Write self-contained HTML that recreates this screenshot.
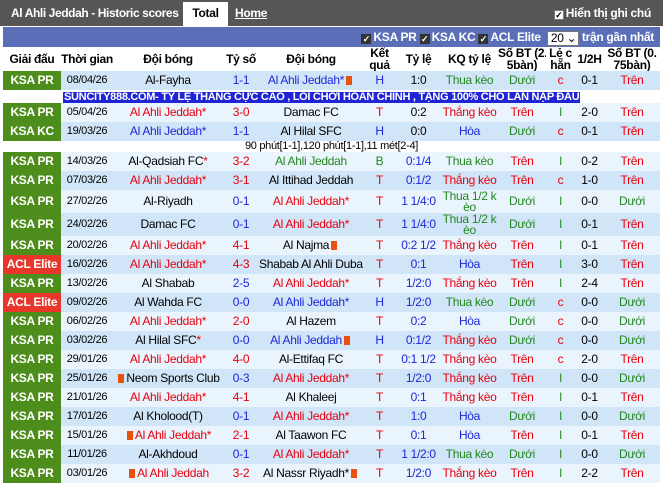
<!DOCTYPE html>
<html><head><meta charset="utf-8"><style>
*{margin:0;padding:0;box-sizing:border-box}
body{width:663px;height:482px;overflow:hidden;background:#fff;font-family:"Liberation Sans",sans-serif;font-size:12px;letter-spacing:-0.3px}
.top{height:26px;background:#565656;position:relative;color:#fff;font-weight:bold;font-size:12px}
.top .t{position:absolute;left:11px;top:6px;letter-spacing:-0.4px}
.tab{position:absolute;left:183px;top:2px;width:45px;height:24px;background:#fff;color:#000;text-align:center;line-height:22px}
.home{position:absolute;left:235px;top:6px;text-decoration:underline}
.show{position:absolute;right:12px;top:6px}
.cb{display:inline-block;width:10px;height:10px;background:#fff;border:1px solid #777;vertical-align:-1px;margin-right:2px;font-size:9px;line-height:8px;color:#000;text-align:center}
.filt{height:20px;margin:1px 3px 0;background:#5a6fb8;color:#fff;font-weight:bold;font-size:12px;text-align:right;padding:3px 6px 0 0}
.filt .cb{background:#333;color:#fff;border-color:#333}
.sel{display:inline-block;width:32px;height:15px;background:#fff;color:#000;border:1px solid #777;font-weight:normal;text-align:left;padding-left:3px;line-height:13px;vertical-align:-1px}
table{border-collapse:collapse;table-layout:fixed;width:657px;margin-left:3px}
td{text-align:center;white-space:nowrap;height:19px;padding:0;font-size:12px;line-height:13px;overflow:hidden}
th{font-weight:bold;font-size:12px;line-height:12px;height:22px;background:#fff;white-space:nowrap;overflow:hidden;padding:0}
.lg{color:#fff;font-weight:bold;font-size:12px}
.a td{background:#d0e5f7}.b td{background:#eaf4fc}
.a td.lg.g,.b td.lg.g{background:#4d8d1c}.a td.lg.r,.b td.lg.r{background:#e8372a}
.d{font-size:11px}
.red{color:#e8000e}.blu{color:#1d27d9}.grn{color:#23861f}
.tall td{height:23px;line-height:11px}
.ban td{height:11px;background:#fff}
.ban span{background:#1f24d4;color:#fff;font-weight:bold;font-size:11px;line-height:11px;display:inline-block;padding:0 1px}
.note td{height:11px;font-size:11px;line-height:11px;background:#fff}
.ic{display:inline-block;width:6px;height:9px;background:#e8520e;vertical-align:-1px;margin:0 2px}
</style></head><body>
<div class="top"><span class="t">Al Ahli Jeddah - Historic scores</span><span class="tab">Total</span><span class="home">Home</span><span class="show"><span class="cb">✓</span>Hiển thị ghi chú</span></div>
<div class="filt"><span class="cb">✓</span>KSA PR <span class="cb">✓</span>KSA KC <span class="cb">✓</span>ACL Elite &nbsp;<span class="sel">20 ⌄</span> trận gần nhất</div>
<table>
<colgroup><col style="width:58px"><col style="width:52px"><col style="width:110px"><col style="width:36px"><col style="width:104px"><col style="width:33px"><col style="width:45px"><col style="width:57px"><col style="width:48px"><col style="width:29px"><col style="width:29px"><col style="width:56px"></colgroup>
<tr><th>Giải đấu</th><th>Thời gian</th><th>Đội bóng</th><th>Tỷ số</th><th>Đội bóng</th><th>Kết<br>quả</th><th>Tỷ lệ</th><th>KQ tỷ lệ</th><th>Số BT (2.<br>5bàn)</th><th>Lẻ c<br>hẵn</th><th>1/2H</th><th>Số BT (0.<br>75bàn)</th></tr>
<tr class="a"><td class="lg g">KSA PR</td><td class="d">08/04/26</td><td>Al-Fayha</td><td class="blu">1-1</td><td class="blu">Al Ahli Jeddah*<span class="ic"></span></td><td class="blu">H</td><td>1:0</td><td class="grn">Thua kèo</td><td class="grn">Dưới</td><td class="red">c</td><td>0-1</td><td class="red">Trên</td></tr>
<tr class="ban"><td colspan="12" style="text-align:left;padding-left:60px"><span>SUNCITY888.COM- TỶ LỆ THẮNG CỰC CAO , LỐI CHƠI HOÀN CHỈNH , TẶNG 100% CHO LẦN NẠP ĐẦU</span></td></tr>
<tr class="b"><td class="lg g">KSA PR</td><td class="d">05/04/26</td><td class="red">Al Ahli Jeddah*</td><td class="red">3-0</td><td>Damac FC</td><td class="red">T</td><td>0:2</td><td class="red">Thắng kèo</td><td class="red">Trên</td><td class="grn">l</td><td>2-0</td><td class="red">Trên</td></tr>
<tr class="a"><td class="lg g">KSA KC</td><td class="d">19/03/26</td><td class="blu">Al Ahli Jeddah*</td><td class="blu">1-1</td><td>Al Hilal SFC</td><td class="blu">H</td><td>0:0</td><td class="blu">Hòa</td><td class="grn">Dưới</td><td class="red">c</td><td>0-1</td><td class="red">Trên</td></tr>
<tr class="note"><td colspan="12">90 phút[1-1],120 phút[1-1],11 mét[2-4]</td></tr>
<tr class="b"><td class="lg g">KSA PR</td><td class="d">14/03/26</td><td>Al-Qadsiah FC<span class="red">*</span></td><td class="red">3-2</td><td class="grn">Al Ahli Jeddah</td><td class="grn">B</td><td class="blu">0:1/4</td><td class="grn">Thua kèo</td><td class="red">Trên</td><td class="grn">l</td><td>0-2</td><td class="red">Trên</td></tr>
<tr class="a"><td class="lg g">KSA PR</td><td class="d">07/03/26</td><td class="red">Al Ahli Jeddah*</td><td class="red">3-1</td><td>Al Ittihad Jeddah</td><td class="red">T</td><td class="blu">0:1/2</td><td class="red">Thắng kèo</td><td class="red">Trên</td><td class="red">c</td><td>1-0</td><td class="red">Trên</td></tr>
<tr class="b tall"><td class="lg g">KSA PR</td><td class="d">27/02/26</td><td>Al-Riyadh</td><td class="blu">0-1</td><td class="red">Al Ahli Jeddah*</td><td class="red">T</td><td class="blu">1 1/4:0</td><td class="grn">Thua 1/2 k<br>èo</td><td class="grn">Dưới</td><td class="grn">l</td><td>0-0</td><td class="grn">Dưới</td></tr>
<tr class="a tall"><td class="lg g">KSA PR</td><td class="d">24/02/26</td><td>Damac FC</td><td class="blu">0-1</td><td class="red">Al Ahli Jeddah*</td><td class="red">T</td><td class="blu">1 1/4:0</td><td class="grn">Thua 1/2 k<br>èo</td><td class="grn">Dưới</td><td class="grn">l</td><td>0-1</td><td class="red">Trên</td></tr>
<tr class="b"><td class="lg g">KSA PR</td><td class="d">20/02/26</td><td class="red">Al Ahli Jeddah*</td><td class="red">4-1</td><td>Al Najma<span class="ic"></span></td><td class="red">T</td><td class="blu">0:2 1/2</td><td class="red">Thắng kèo</td><td class="red">Trên</td><td class="grn">l</td><td>0-1</td><td class="red">Trên</td></tr>
<tr class="a"><td class="lg r">ACL Elite</td><td class="d">16/02/26</td><td class="red">Al Ahli Jeddah*</td><td class="red">4-3</td><td>Shabab Al Ahli Dubai</td><td class="red">T</td><td class="blu">0:1</td><td class="blu">Hòa</td><td class="red">Trên</td><td class="grn">l</td><td>3-0</td><td class="red">Trên</td></tr>
<tr class="b"><td class="lg g">KSA PR</td><td class="d">13/02/26</td><td>Al Shabab</td><td class="blu">2-5</td><td class="red">Al Ahli Jeddah*</td><td class="red">T</td><td class="blu">1/2:0</td><td class="red">Thắng kèo</td><td class="red">Trên</td><td class="grn">l</td><td>2-4</td><td class="red">Trên</td></tr>
<tr class="a"><td class="lg r">ACL Elite</td><td class="d">09/02/26</td><td>Al Wahda FC</td><td class="blu">0-0</td><td class="blu">Al Ahli Jeddah*</td><td class="blu">H</td><td class="blu">1/2:0</td><td class="grn">Thua kèo</td><td class="grn">Dưới</td><td class="red">c</td><td>0-0</td><td class="grn">Dưới</td></tr>
<tr class="b"><td class="lg g">KSA PR</td><td class="d">06/02/26</td><td class="red">Al Ahli Jeddah*</td><td class="red">2-0</td><td>Al Hazem</td><td class="red">T</td><td class="blu">0:2</td><td class="blu">Hòa</td><td class="grn">Dưới</td><td class="red">c</td><td>0-0</td><td class="grn">Dưới</td></tr>
<tr class="a"><td class="lg g">KSA PR</td><td class="d">03/02/26</td><td>Al Hilal SFC<span class="red">*</span></td><td class="blu">0-0</td><td class="blu">Al Ahli Jeddah<span class="ic"></span></td><td class="blu">H</td><td class="blu">0:1/2</td><td class="red">Thắng kèo</td><td class="grn">Dưới</td><td class="red">c</td><td>0-0</td><td class="grn">Dưới</td></tr>
<tr class="b"><td class="lg g">KSA PR</td><td class="d">29/01/26</td><td class="red">Al Ahli Jeddah*</td><td class="red">4-0</td><td>Al-Ettifaq FC</td><td class="red">T</td><td class="blu">0:1 1/2</td><td class="red">Thắng kèo</td><td class="red">Trên</td><td class="red">c</td><td>2-0</td><td class="red">Trên</td></tr>
<tr class="a"><td class="lg g">KSA PR</td><td class="d">25/01/26</td><td><span class="ic"></span>Neom Sports Club</td><td class="blu">0-3</td><td class="red">Al Ahli Jeddah*</td><td class="red">T</td><td class="blu">1/2:0</td><td class="red">Thắng kèo</td><td class="red">Trên</td><td class="grn">l</td><td>0-0</td><td class="grn">Dưới</td></tr>
<tr class="b"><td class="lg g">KSA PR</td><td class="d">21/01/26</td><td class="red">Al Ahli Jeddah*</td><td class="red">4-1</td><td>Al Khaleej</td><td class="red">T</td><td class="blu">0:1</td><td class="red">Thắng kèo</td><td class="red">Trên</td><td class="grn">l</td><td>0-1</td><td class="red">Trên</td></tr>
<tr class="a"><td class="lg g">KSA PR</td><td class="d">17/01/26</td><td>Al Kholood(T)</td><td class="blu">0-1</td><td class="red">Al Ahli Jeddah*</td><td class="red">T</td><td class="blu">1:0</td><td class="blu">Hòa</td><td class="grn">Dưới</td><td class="grn">l</td><td>0-0</td><td class="grn">Dưới</td></tr>
<tr class="b"><td class="lg g">KSA PR</td><td class="d">15/01/26</td><td class="red"><span class="ic"></span>Al Ahli Jeddah*</td><td class="red">2-1</td><td>Al Taawon FC</td><td class="red">T</td><td class="blu">0:1</td><td class="blu">Hòa</td><td class="red">Trên</td><td class="grn">l</td><td>0-1</td><td class="red">Trên</td></tr>
<tr class="a"><td class="lg g">KSA PR</td><td class="d">11/01/26</td><td>Al-Akhdoud</td><td class="blu">0-1</td><td class="red">Al Ahli Jeddah*</td><td class="red">T</td><td class="blu">1 1/2:0</td><td class="grn">Thua kèo</td><td class="grn">Dưới</td><td class="grn">l</td><td>0-0</td><td class="grn">Dưới</td></tr>
<tr class="b"><td class="lg g">KSA PR</td><td class="d">03/01/26</td><td class="red"><span class="ic"></span>Al Ahli Jeddah</td><td class="red">3-2</td><td>Al Nassr Riyadh*<span class="ic"></span></td><td class="red">T</td><td class="blu">1/2:0</td><td class="red">Thắng kèo</td><td class="red">Trên</td><td class="grn">l</td><td>2-2</td><td class="red">Trên</td></tr>
</table>
</body></html>
